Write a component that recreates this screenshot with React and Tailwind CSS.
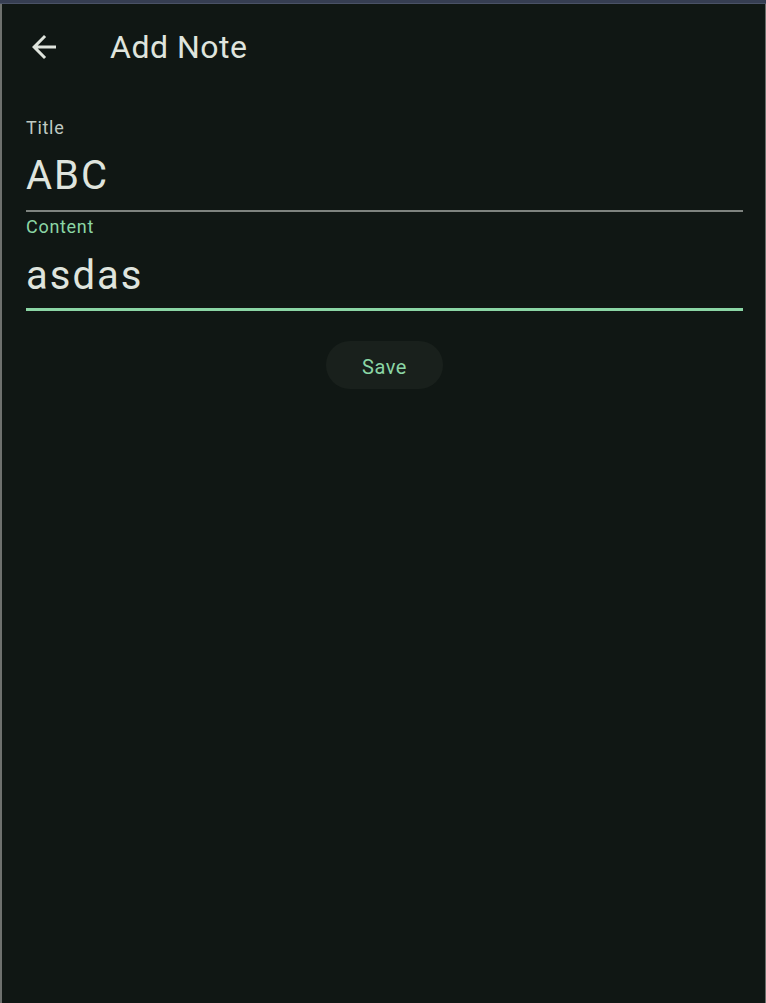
export default function App() {
  return (
    <div className="w-full h-[1003px] flex flex-col bg-[#101714] overflow-hidden" style={{ fontFamily: 'Roboto, "Liberation Sans", sans-serif' }}>
      <div className="h-[4px] bg-[#363e52] border-b border-[#4a5266] shrink-0" />
      <div className="flex-1 flex flex-col border-l-2 border-l-[#6e716e] border-r border-r-[#6a6d6a]">
        <header className="h-[86px] flex items-center pl-[24px] shrink-0">
          <svg width="36" height="36" viewBox="0 0 24 24" fill="#dfe4dd" aria-hidden="true">
            <path d="M20 11H7.83l5.59-5.59L12 4l-8 8 8 8 1.41-1.41L7.83 13H20v-2z" />
          </svg>
          <h1 className="ml-[48px] text-[32px] leading-[40px] tracking-[0.5px] text-[#dfe4dd] font-normal">Add Note</h1>
        </header>
        <main className="pl-[24px] pr-[22px] flex flex-col">
          <div className="mt-[26px] border-b-2 border-[#7e837f] pb-[10px]">
            <div className="text-[18px] leading-[24px] tracking-[0.7px] text-[#bfc9c2]">Title</div>
            <div className="mt-[12px] text-[40px] leading-[48px] tracking-[2px] text-[#dfe4dd]">ABC</div>
          </div>
          <div className="mt-[3px] border-b-[3px] border-[#8bd6a5] pb-[8px]">
            <div className="text-[18px] leading-[24px] tracking-[0.7px] text-[#8bd6a5]">Content</div>
            <div className="mt-[13px] text-[40px] leading-[48px] tracking-[2px] text-[#dfe4dd]">asdas</div>
          </div>
          <div className="mt-[30px] flex justify-center">
            <button className="w-[117px] h-[48px] pt-[3px] rounded-full bg-[#19201c] text-[20px] tracking-[0.6px] text-[#8bd6a5]">Save</button>
          </div>
        </main>
      </div>
    </div>
  );
}
